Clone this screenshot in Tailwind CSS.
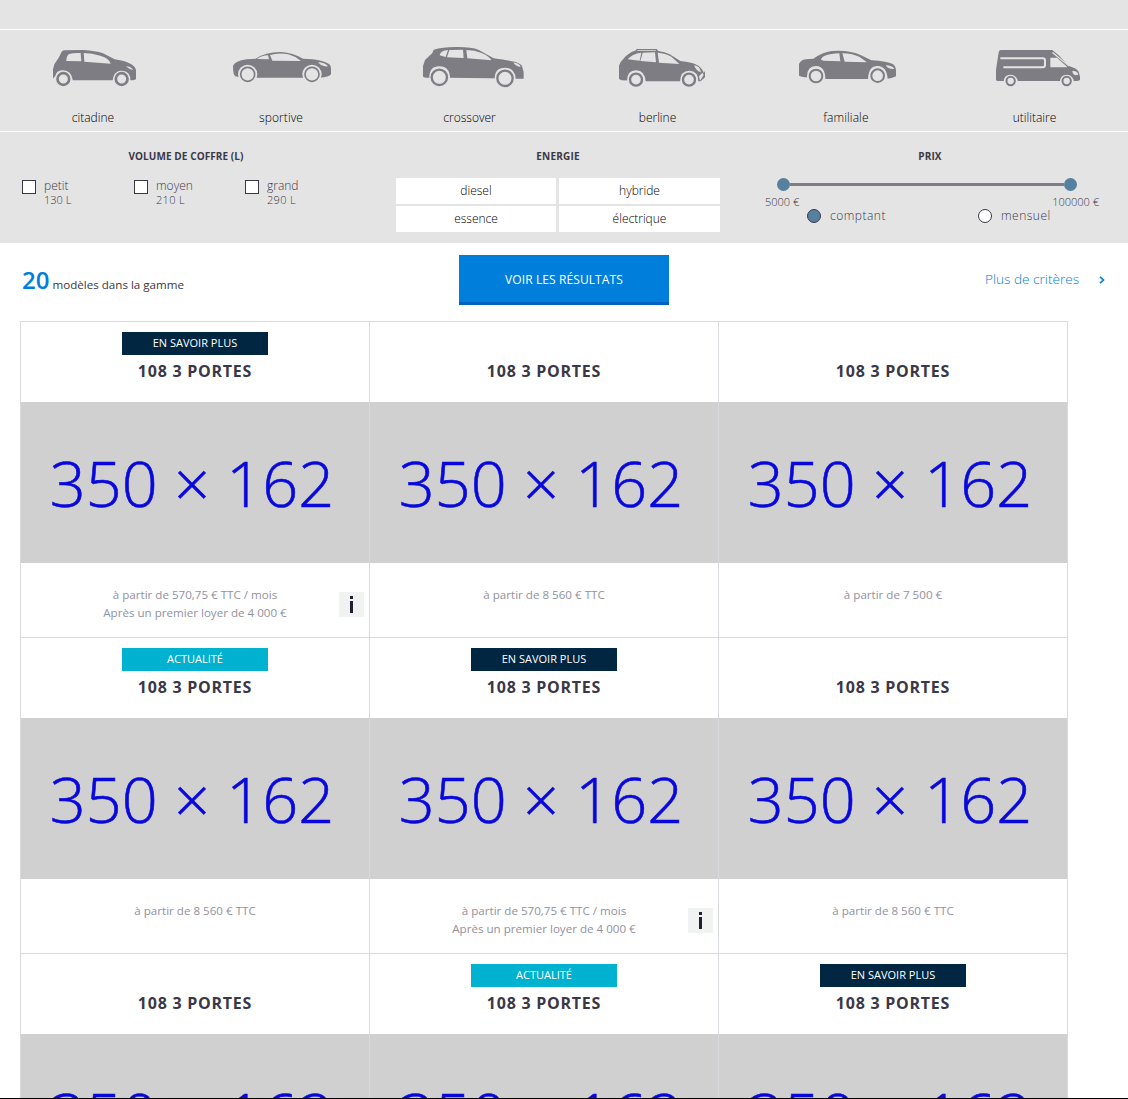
<!DOCTYPE html>
<html lang="fr">
<head>
<meta charset="utf-8">
<title>Gamme</title>
<script src="https://cdn.jsdelivr.net/npm/@tailwindcss/browser@4"></script>
</head>
<body class="bg-white font-['Open_Sans','Noto_Sans',sans-serif] text-[#3a3847]">
<div class="relative h-[1099px] w-[1128px] overflow-hidden">
<header class="h-[243px] bg-[#e4e4e4]">
  <div class="h-[30px] border-b border-white"></div>
  <nav class="flex h-[102px] border-b border-white text-center text-[12px] leading-[16px] font-light text-black">
    <a class="w-[188px]">
      <svg class="block h-[66px] w-[188px]" viewBox="-90 -15 564 198" fill="#7e7d83">
        <path d="M69 127V103L73 88L86 68L95 50Q98 46 106 46L160 45Q196 47 219 55L254 73Q288 78 304 88Q317 96 318 106V131Q316 136 300 136H128L70 132Z"/>
        <path fill="#e4e4e4" d="M117 57Q130 53 152 54L154 79L109 78Q109 63 117 57ZM161 54Q187 54 211 62Q238 70 242 86L163 80ZM288 93Q301 94 310 104Q297 104 288 93Z"/>
        <path fill="#e4e4e4" d="M69 131L76 122Q80 106 100 106Q123 107 128 133V153H69ZM248 153Q246 132 254 117Q263 106 276 107Q302 108 301 137V153Z"/>
        <g fill="none" stroke="#7e7d83" stroke-width="8"><circle cx="100" cy="132" r="17.500"/><circle cx="275" cy="132" r="17.500"/></g>
      </svg>
      <span class="-ml-[2px] block pt-[14px]">citadine</span></a>
    <a class="w-[188px]">
      <svg class="block h-[66px] w-[188px]" viewBox="474 -15 564 198" fill="#7e7d83">
        <path d="M609 92Q615 78 650 73L677 71Q708 50 754 51Q788 53 819 71Q880 73 898 88Q903 91 903 102V118Q898 127 868 128H636L616 124Q609 119 609 92Z"/>
        <path fill="#e4e4e4" d="M681 72Q696 61 714 61L717 73ZM720 60Q746 52 775 58Q797 64 813 78L727 77ZM864 82Q884 82 894 94Q875 96 864 82Z"/>
        <g fill="#e4e4e4"><circle cx="653" cy="118" r="29"/><circle cx="846" cy="118" r="29"/></g>
        <g fill="none" stroke="#7e7d83" stroke-width="5"><circle cx="653" cy="118" r="21"/><circle cx="846" cy="118" r="21"/></g>
      </svg>
      <span class="-ml-[2px] block pt-[14px] tracking-[0.1px]">sportive</span></a>
    <a class="w-[188px]">
      <svg class="block h-[66px] w-[188px]" viewBox="-72 -15 564 198" fill="#7e7d83">
        <path d="M69 125V93L75 75L97 54L101 44Q130 35 174 36Q216 36 235 44L281 70Q325 76 345 80Q361 85 366 93L371 112V131H345L145 128H76Z"/>
        <path fill="#e4e4e4" d="M119 61Q122 46 144 45L137 66ZM148 45L189 44L191 69L141 67ZM199 45Q224 45 245 54Q270 65 274 76L202 70ZM340 82Q359 85 362 96Q347 95 340 82Z"/>
        <path fill="#e4e4e4" d="M88 127Q88 94 118 94Q150 95 150 130V145H88ZM284 131Q284 98 315 98Q345 99 347 131V145H284Z"/>
        <g fill="none" stroke="#7e7d83" stroke-width="7"><circle cx="118" cy="127" r="23"/><circle cx="315" cy="130" r="23"/></g>
      </svg>
      <span class="-ml-[1px] block pt-[14px]">crossover</span></a>
    <a class="w-[188px]">
      <svg class="block h-[66px] w-[188px]" viewBox="492 -15 564 198" fill="#7e7d83">
        <path d="M657 132V92L662 81L677 64Q693 49 706 47L710 42H770L775 48Q795 50 809 58L841 78Q878 81 895 92Q909 103 911 114L915 108V127L902 139H737L665 136Z"/>
        <path fill="#e4e4e4" d="M713 45H766L769 47H710ZM683 73Q696 56 724 53L719 77ZM728 53L765 52L768 82L721 78ZM773 53Q797 54 814 65L838 87L777 83ZM882 91Q900 93 903 112Q890 110 882 91ZM897 124L907 113L911 120L900 137Z"/>
        <path fill="#e4e4e4" d="M681 137Q682 106 708 106Q735 107 737 140V150H681ZM840 140Q841 107 868 107Q895 108 895 140V150H840Z"/>
        <g fill="none" stroke="#7e7d83" stroke-width="7"><circle cx="708" cy="134" r="18"/><circle cx="867" cy="134" r="18"/></g>
      </svg>
      <span class="-ml-[1px] block pt-[14px]">berline</span></a>
    <a class="w-[188px]">
      <svg class="block h-[66px] w-[188px]" viewBox="-84 -15 564 198" fill="#7e7d83">
        <path d="M57 122V87Q62 75 77 73L100 71Q127 52 155 48Q210 44 243 61L274 76Q323 79 338 87Q347 92 348 107V124Q337 131 318 132H132L68 126Z"/>
        <path fill="#e4e4e4" d="M123 74Q127 57 178 55L181 79L131 77ZM187 55Q218 56 239 66L261 82L194 80ZM317 91Q337 91 343 102Q325 104 317 91Z"/>
        <path fill="#e4e4e4" d="M81 125Q81 93 108 93Q136 94 136 132V141H81ZM264 133Q265 93 293 93Q320 94 323 131V141H264Z"/>
        <g fill="none" stroke="#7e7d83" stroke-width="6"><circle cx="108" cy="123" r="19"/><circle cx="293" cy="122" r="19"/></g>
      </svg>
      <span class="block pt-[14px] tracking-[0.1px]">familiale</span></a>
    <a class="w-[188px]">
      <svg class="block h-[66px] w-[188px]" viewBox="480 -15 564 198" fill="#7e7d83">
        <path d="M648 134V104L656 52Q657 45 663 45H817L836 61L865 92Q892 100 896 110L900 125V134Q896 139 886 138H658Q648 138 648 134Z"/>
        <path fill="none" stroke="#e4e4e4" stroke-width="6" d="M661 70H788Q795 70 795 77V91Q795 97 788 97H670"/>
        <path fill="#e4e4e4" d="M811 68H831L861 95V97H811ZM819 51L865 90L867 95L816 54ZM877 108Q892 106 895 119L887 121Q878 119 877 108Z"/>
        <path fill="#e4e4e4" d="M671 140Q672 119 691 119Q711 120 714 140V150H671ZM840 140Q841 119 860 119Q879 120 882 140V150H840Z"/>
        <g fill="none" stroke="#7e7d83" stroke-width="6"><circle cx="692" cy="138" r="12.500"/><circle cx="860" cy="138" r="12.500"/></g>
      </svg>
      <span class="ml-[1px] block pt-[14px]">utilitaire</span></a>
  </nav>
  <div class="flex h-[111px] text-[12px]">
    <section class="w-[372px] pt-[16px]">
      <h2 class="text-center text-[10px] leading-[16px] font-bold tracking-[0.08px]">VOLUME DE COFFRE (L)</h2>
      <div class="flex pt-[16px] pl-[22px] text-[12px] leading-[14px] font-light">
        <label class="flex w-[112px] gap-[8px]"><i class="size-[14px] border border-[#3a3847] bg-white"></i><span class="-mt-[1px]">petit<br><span class="text-[11px]">130 L</span></span></label>
        <label class="flex w-[111px] gap-[8px]"><i class="size-[14px] border border-[#3a3847] bg-white"></i><span class="-mt-[1px]">moyen<br><span class="text-[11px] tracking-[0.3px]">210 L</span></span></label>
        <label class="flex gap-[8px]"><i class="size-[14px] border border-[#3a3847] bg-white"></i><span class="-mt-[1px]">grand<br><span class="text-[11px] tracking-[0.3px]">290 L</span></span></label>
      </div>
    </section>
    <section class="w-[372px] pt-[16px]">
      <h2 class="text-center text-[10px] leading-[16px] font-bold tracking-[0.2px]">ENERGIE</h2>
      <div class="ml-[24px] grid grid-cols-[160px_161px] gap-x-[3px] gap-y-[2px] pt-[14px] text-center text-[12px] leading-[25px] font-light text-black">
        <div class="h-[26px] bg-white">diesel</div><div class="h-[26px] bg-white">hybride</div>
        <div class="h-[26px] bg-white">essence</div><div class="h-[26px] bg-white">électrique</div>
      </div>
    </section>
    <section class="w-[372px] pt-[16px]">
      <h2 class="text-center text-[10px] leading-[16px] font-bold tracking-[0.1px]">PRIX</h2>
      <div class="mt-[14px] ml-[33px] flex h-[13px] w-[300px] items-center">
        <i class="size-[13px] rounded-full bg-[#5580a0]"></i><i class="h-[3px] flex-1 bg-[#7e7d83]"></i><i class="size-[13px] rounded-full bg-[#5580a0]"></i>
      </div>
      <div class="ml-[21px] flex w-[334px] justify-between pt-[4px] text-[11px] leading-[14px] font-light"><span>5000 €</span><span>100000 €</span></div>
      <div class="flex pl-[63px] text-[12px] leading-[14px] font-light tracking-[0.5px]">
        <label class="flex w-[171px] gap-[9px]"><i class="size-[14px] rounded-full border border-[#3a3847] bg-[#5580a0]"></i>comptant</label>
        <label class="flex gap-[9px]"><i class="size-[14px] rounded-full border border-[#3a3847] bg-white"></i>mensuel</label>
      </div>
    </section>
  </div>
</header>
<div class="flex h-[78px] pt-[12px]">
  <p class="w-[459px] pt-[9px] pl-[22px] text-[11.600px] leading-[32px]"><b class="text-[24px] font-semibold text-[#007edb]">20</b> modèles dans la gamme</p>
  <button class="h-[50px] w-[210px] border-b-[3px] border-[#0061c2] bg-[#007edb] pt-[2px] text-[12px] font-medium tracking-[0.1px] text-white">VOIR LES RÉSULTATS</button>
  <a class="flex h-[48px] flex-1 items-center justify-end pr-[23px] text-[13.600px] font-light text-[#007edb]">Plus de critères<svg class="mt-[1px] ml-[20px]" width="6" height="8" viewBox="0 0 6 8" fill="none" stroke="#007edb" stroke-width="1.700"><path d="M1 .8L4.400 4L1 7.200"/></svg></a>
</div>
<main id="grid" class="ml-[20px] grid w-[1048px] grid-cols-[349px_349px_350px]"></main>
<div class="absolute inset-x-0 bottom-0 h-px bg-black"></div>
</div>
<script>
const monthly = 'à partir de 570,75 € TTC / mois<br>Après un premier loyer de 4 000 €';
const cars = [
  ['EN SAVOIR PLUS', monthly], ['', 'à partir de 8 560 € TTC'], ['', 'à partir de 7 500 €'],
  ['ACTUALITÉ', 'à partir de 8 560 € TTC'], ['EN SAVOIR PLUS', monthly], ['', 'à partir de 8 560 € TTC'],
  ['', ''], ['ACTUALITÉ', ''], ['EN SAVOIR PLUS', '']
];
document.getElementById('grid').innerHTML = cars.map(([tag, price], i) => `
  <article class="relative h-[316px] border-t border-l border-[#d9dadd] text-center ${i % 3 === 2 ? 'border-r' : ''}">
    <div class="flex h-[80px] flex-col items-center pt-[10px]">
      <div class="h-[23px] w-[146px] text-[11px] leading-[22px] font-medium text-white ${tag === 'ACTUALITÉ' ? 'bg-[#00b1d0]' : tag ? 'bg-[#002642]' : ''}">${tag}</div>
      <h3 class="pt-[4px] text-[16px] leading-[24px] font-bold tracking-[0.75px]">108 3 PORTES</h3>
    </div>
    <div class="h-[161px] bg-[#d0d0d0] pt-[41px] pr-[6px] text-[63px] leading-[80px] font-light whitespace-nowrap text-[#0808dc] [-webkit-text-stroke:0.600px_#0808dc]">350 × 162</div>
    <p class="pt-[23px] text-[11.600px] leading-[18px] text-[#92919f]">${price}</p>
    ${price === monthly ? '<span class="absolute right-[5px] bottom-[20px] flex h-[25px] w-[25px] flex-col items-center gap-[2px] bg-[#f1f3f2] pt-[4px]"><i class="h-[3px] w-[3px] bg-[#231f33]"></i><i class="h-[12px] w-[3px] bg-[#231f33]"></i></span>' : ''}
  </article>`).join('');
</script>
</body>
</html>
